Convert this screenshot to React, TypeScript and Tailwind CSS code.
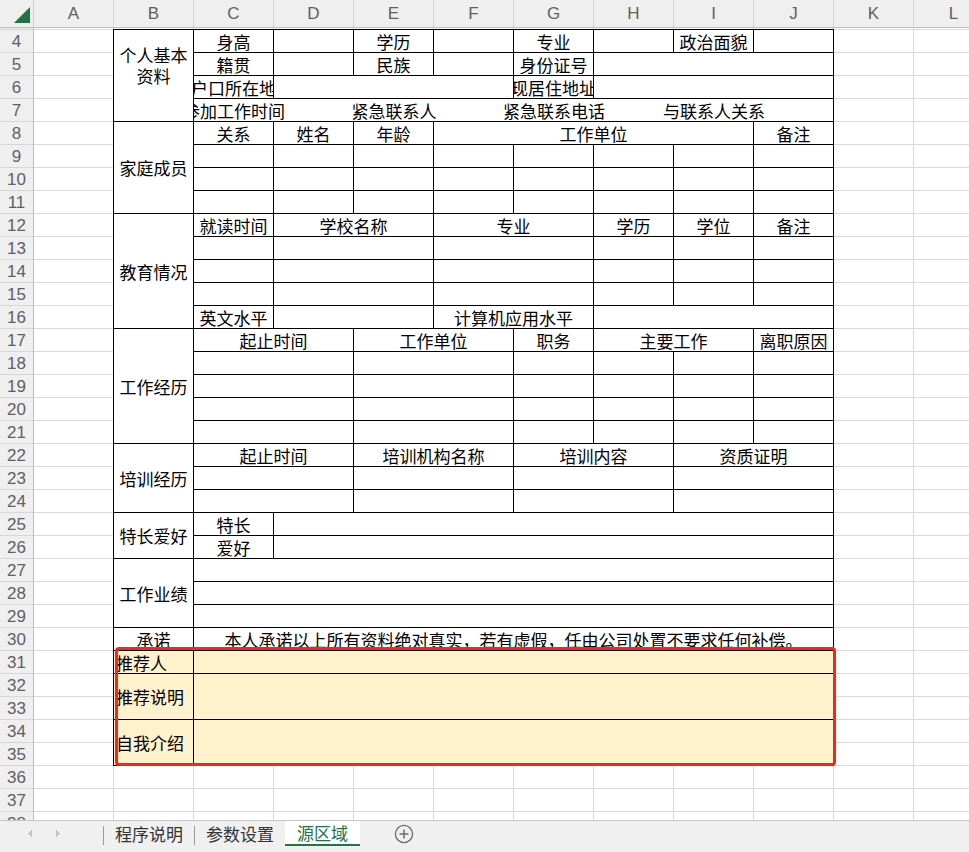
import React from "react";

type Cell = {
  t?: string;
  lines?: string[];
  c?: number;
  r?: number;
  cls?: string;
  box?: boolean;
  clip?: boolean;
};

const colSpan: Record<number, string> = {
  1: "col-span-1",
  2: "col-span-2",
  3: "col-span-3",
  4: "col-span-4",
  7: "col-span-7",
  8: "col-span-8",
};

const rowSpan: Record<number, string> = {
  1: "row-span-1",
  2: "row-span-2",
  3: "row-span-3",
  4: "row-span-4",
  5: "row-span-5",
};

const gold = "bg-[#fff2cc]";
const left = "justify-start pl-[2px]";

// rows 4..35, columns B..J, listed in order so grid auto-placement fills the merges
const rows: Cell[][] = [
  [
    { lines: ["个人基本", "资料"], r: 4, cls: "items-start pt-[14px]" },
    { t: "身高" }, {}, { t: "学历" }, {}, { t: "专业" }, {}, { t: "政治面貌" }, {},
  ],
  [{ t: "籍贯" }, {}, { t: "民族" }, {}, { t: "身份证号" }, { c: 3 }],
  [{ t: "户口所在地" }, { c: 3 }, { t: "现居住地址" }, { c: 3 }],
  [
    { t: "参加工作时间", c: 2, box: true, clip: true, cls: "border-r-0" },
    { t: "紧急联系人", c: 2, box: true, cls: "border-r-0" },
    { t: "紧急联系电话", c: 2, box: true, cls: "border-r-0" },
    { t: "与联系人关系", c: 2, box: true },
  ],
  [{ t: "家庭成员", r: 4 }, { t: "关系" }, { t: "姓名" }, { t: "年龄" }, { t: "工作单位", c: 4 }, { t: "备注" }],
  [{}, {}, {}, {}, {}, {}, {}, {}],
  [{}, {}, {}, {}, {}, {}, {}, {}],
  [{}, {}, {}, {}, {}, {}, {}, {}],
  [{ t: "教育情况", r: 5 }, { t: "就读时间" }, { t: "学校名称", c: 2 }, { t: "专业", c: 2 }, { t: "学历" }, { t: "学位" }, { t: "备注" }],
  [{}, { c: 2 }, { c: 2 }, {}, {}, {}],
  [{}, { c: 2 }, { c: 2 }, {}, {}, {}],
  [{}, { c: 2 }, { c: 2 }, {}, {}, {}],
  [{ t: "英文水平" }, { c: 2 }, { t: "计算机应用水平", c: 2 }, { c: 3 }],
  [{ t: "工作经历", r: 5 }, { t: "起止时间", c: 2 }, { t: "工作单位", c: 2 }, { t: "职务" }, { t: "主要工作", c: 2 }, { t: "离职原因" }],
  [{ c: 2 }, { c: 2 }, {}, {}, {}, {}],
  [{ c: 2 }, { c: 2 }, {}, {}, {}, {}],
  [{ c: 2 }, { c: 2 }, {}, {}, {}, {}],
  [{ c: 2 }, { c: 2 }, {}, {}, {}, {}],
  [{ t: "培训经历", r: 3 }, { t: "起止时间", c: 2 }, { t: "培训机构名称", c: 2 }, { t: "培训内容", c: 2 }, { t: "资质证明", c: 2 }],
  [{ c: 2 }, { c: 2 }, { c: 2 }, { c: 2 }],
  [{ c: 2 }, { c: 2 }, { c: 2 }, { c: 2 }],
  [{ t: "特长爱好", r: 2 }, { t: "特长" }, { c: 7 }],
  [{ t: "爱好" }, { c: 7 }],
  [{ t: "工作业绩", r: 3 }, { c: 8 }],
  [{ c: 8 }],
  [{ c: 8 }],
  [{ t: "承诺" }, { t: "本人承诺以上所有资料绝对真实，若有虚假，任由公司处置不要求任何补偿。", c: 8 }],
  [{ t: "推荐人", cls: `${gold} ${left}` }, { c: 8, cls: gold }],
  [{ t: "推荐说明", r: 2, cls: `${gold} ${left}` }, { c: 8, r: 2, cls: gold }],
  [{ t: "自我介绍", r: 2, cls: `${gold} ${left}` }, { c: 8, r: 2, cls: gold }],
];

const columns = ["A", "B", "C", "D", "E", "F", "G", "H", "I", "J", "K", "L"];
const rowNumbers = Array.from({ length: 35 }, (_, i) => i + 4);

function SheetCell({ cell }: { cell: Cell }) {
  const overflow = cell.box && !cell.clip ? "overflow-visible" : "overflow-hidden";
  const cls = [
    colSpan[cell.c ?? 1],
    rowSpan[cell.r ?? 1],
    "flex items-center whitespace-nowrap border-r border-b border-black",
    overflow,
    cell.box ? "justify-start" : "justify-center",
    cell.cls ?? "",
  ].join(" ");

  if (cell.box) {
    return (
      <div className={cls}>
        <div className="flex w-[80px] shrink-0 justify-center">
          <span className="shrink-0 whitespace-nowrap">{cell.t}</span>
        </div>
      </div>
    );
  }

  if (cell.lines) {
    return (
      <div className={cls}>
        <div className="flex flex-col items-center leading-[21px]">
          {cell.lines.map((l) => (
            <span key={l}>{l}</span>
          ))}
        </div>
      </div>
    );
  }

  return <div className={cls}>{cell.t}</div>;
}

function TabBar() {
  return (
    <div className="flex h-[32px] flex-col border-t border-[#c6c6c6] bg-[#f0f0f0]">
      <div className="flex h-[25px] items-stretch text-[17px] text-[#333]">
        <div className="flex w-[103px] items-center">
          <svg width="6" height="9" viewBox="0 0 6 9" className="ml-[27px]">
            <path d="M5 0.5 L1 4.5 L5 8.5 Z" fill="#c4c4c4" />
          </svg>
          <svg width="6" height="9" viewBox="0 0 6 9" className="ml-[22px]">
            <path d="M1 0.5 L5 4.5 L1 8.5 Z" fill="#c4c4c4" />
          </svg>
        </div>
        <div className="mt-[5px] h-[19px] w-px bg-[#9a9a9a]" />
        <div className="flex items-center px-[11px] leading-none">程序说明</div>
        <div className="mt-[5px] h-[19px] w-px bg-[#9a9a9a]" />
        <div className="flex items-center px-[11px] leading-none">参数设置</div>
        <div className="flex items-center border-b-2 border-[#217346] bg-white px-[12px] leading-none text-[#217346]">
          源区域
        </div>
        <div className="ml-[34px] flex items-center">
          <svg width="20" height="20" viewBox="0 0 20 20">
            <circle cx="10" cy="10" r="8.6" fill="none" stroke="#6b6b6b" strokeWidth="1.3" />
            <path d="M10 5.5 V14.5 M5.5 10 H14.5" stroke="#6b6b6b" strokeWidth="1.5" />
          </svg>
        </div>
      </div>
    </div>
  );
}

export default function App() {
  return (
    <div
      className="flex h-[852px] w-[969px] flex-col overflow-hidden bg-white"
      style={{ fontFamily: '"Noto Sans CJK SC", "Noto Sans", sans-serif' }}
    >
      {/* column header */}
      <div className="flex h-[28px] shrink-0 border-b border-[#bfbfbf] bg-[#efefef]">
        <div className="flex w-[34px] shrink-0 items-end justify-end border-r border-[#cfcfcf] pb-[3px] pr-[2px]">
          <svg width="17" height="17" viewBox="0 0 17 17">
            <path d="M16 0 L16 16 L0 16 Z" fill="#217346" />
          </svg>
        </div>
        {columns.map((col) => (
          <div
            key={col}
            className="flex w-[80px] shrink-0 items-center justify-center border-r border-[#d6d6d6] text-[17px] text-[#606060]"
            style={{ fontFamily: '"Liberation Sans", Arial, sans-serif' }}
          >
            {col}
          </div>
        ))}
      </div>

      {/* sheet body */}
      <div className="flex min-h-0 flex-1 overflow-hidden">
        <div
          className="flex w-[34px] shrink-0 flex-col border-r border-[#bfbfbf] bg-[#efefef] text-[17px] text-[#606060]"
          style={{ fontFamily: '"Liberation Sans", Arial, sans-serif' }}
        >
          <div className="h-[2px] shrink-0 border-b border-[#d6d6d6]" />
          {rowNumbers.map((n) => (
            <div
              key={n}
              className="flex h-[23px] shrink-0 items-center justify-center border-b border-[#d6d6d6] pt-px"
            >
              {n}
            </div>
          ))}
        </div>

        <div className="flex-1 bg-[linear-gradient(to_right,#dadada_1px,transparent_1px),linear-gradient(to_bottom,#dadada_1px,transparent_1px)] bg-size-[80px_23px] bg-position-[79px_1px]">
          <div className="relative ml-[79px] mt-px grid w-[721px] grid-cols-[repeat(9,80px)] auto-rows-[23px] border-l border-t border-black bg-white text-[17px] leading-none text-black">
            {rows.map((row, i) =>
              row.map((cell, j) => <SheetCell key={`${i}-${j}`} cell={cell} />)
            )}
            <div className="pointer-events-none absolute left-px top-[617px] h-[119px] w-[721px] rounded-[4px] border-[3px] border-[#f8261a]" />
          </div>
        </div>
      </div>

      <TabBar />
    </div>
  );
}
